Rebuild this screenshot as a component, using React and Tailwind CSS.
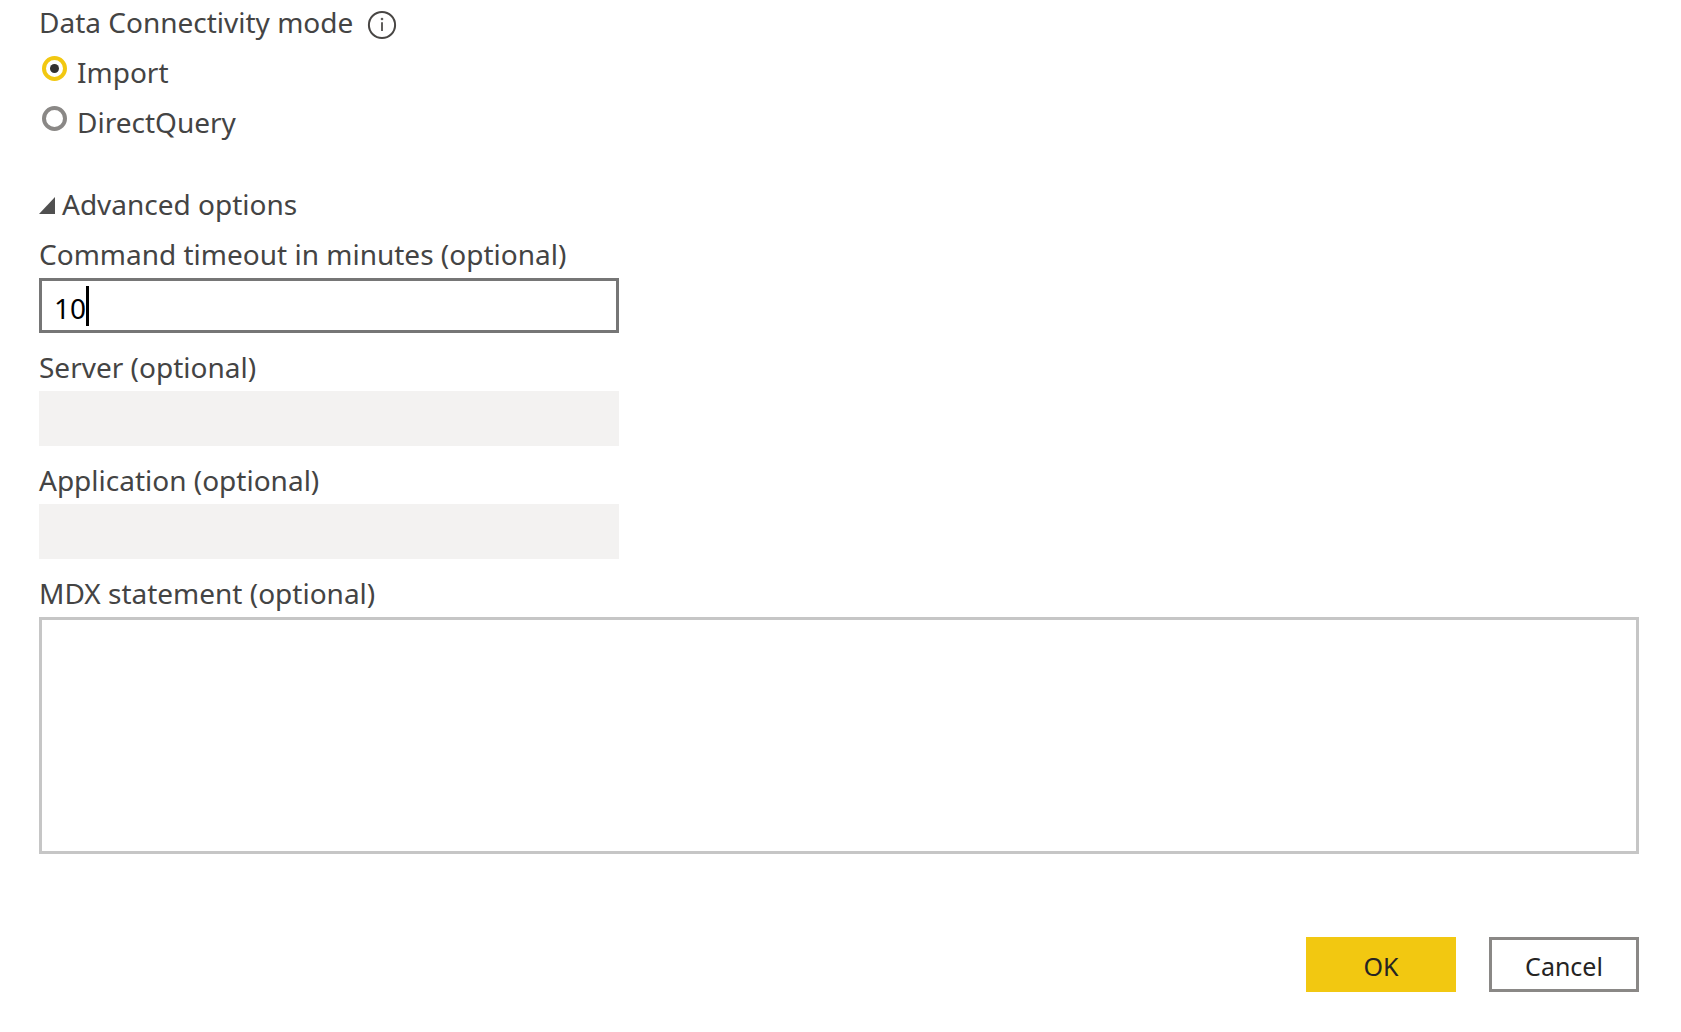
import { useState } from "react";

function InfoIcon() {
  return (
    <svg viewBox="0 0 30 30" className="size-[30px]" fill="none" aria-hidden="true">
      <circle cx="15" cy="15" r="13.1" stroke="#484644" strokeWidth="2" />
      <path d="M15 12.2V21" stroke="#605e5c" strokeWidth="2" />
      <circle cx="15" cy="9" r="1.3" fill="#605e5c" />
    </svg>
  );
}

function ModeOption({ value, label, selected, onSelect }) {
  return (
    <label className="flex w-fit items-start gap-[10px]">
      <input
        type="radio"
        name="connectivity-mode"
        value={value}
        checked={selected}
        onChange={() => onSelect(value)}
        className="ml-[3px] mt-1 grid size-[25px] shrink-0 appearance-none place-content-center rounded-full border-4 border-[#8a8886] bg-white before:size-[9px] before:rounded-full checked:border-[#f2c811] checked:before:bg-[#323130]"
      />
      <span>{label}</span>
    </label>
  );
}

function Field({ id, label, children }) {
  return (
    <div className="flex flex-col items-start gap-1">
      <label htmlFor={id}>{label}</label>
      {children}
    </div>
  );
}

export default function App() {
  const [mode, setMode] = useState("import");
  const [timeout, setTimeoutValue] = useState("10");
  const [open, setOpen] = useState(true);

  return (
    <form
      onSubmit={(e) => e.preventDefault()}
      className="flex flex-col bg-white pt-[2px] pr-[42px] pb-10 pl-[39px] font-['Noto_Sans',sans-serif] text-[28px] leading-10 text-[#444444]"
    >
      <fieldset className="flex flex-col gap-[10px]">
        <legend className="contents">
          <span className="flex items-center gap-[14px]">
            Data Connectivity mode
            <button type="button" aria-label="About data connectivity modes" className="mt-[6px]">
              <InfoIcon />
            </button>
          </span>
        </legend>
        <ModeOption value="import" label="Import" selected={mode === "import"} onSelect={setMode} />
        <ModeOption value="directquery" label="DirectQuery" selected={mode === "directquery"} onSelect={setMode} />
      </fieldset>

      <button
        type="button"
        aria-expanded={open}
        onClick={() => setOpen(!open)}
        className="mt-[42px] flex w-fit items-center gap-[7px]"
      >
        <svg viewBox="0 0 16 17" className="mt-[2px] h-[17px] w-4" aria-hidden="true">
          <path d="M16 0V17H0Z" fill="#505050" />
        </svg>
        Advanced options
      </button>

      {open && (
        <div className="mt-[10px] flex flex-col gap-[14px]">
          <Field id="timeout" label="Command timeout in minutes (optional)">
            <div className="relative w-full max-w-[580px]">
              <input
                id="timeout"
                type="text"
                value={timeout}
                onChange={(e) => setTimeoutValue(e.target.value)}
                className="h-[55px] w-full border-3 border-[#767676] bg-white px-3 pt-1 text-[28px] text-black caret-transparent outline-none"
              />
              <span className="absolute top-2 left-[47px] h-10 w-[3px] bg-black" />
            </div>
          </Field>
          <Field id="server" label="Server (optional)">
            <input id="server" type="text" disabled className="h-[55px] w-full max-w-[580px] bg-[#f3f2f1] px-4" />
          </Field>
          <Field id="application" label="Application (optional)">
            <input id="application" type="text" disabled className="h-[55px] w-full max-w-[580px] bg-[#f3f2f1] px-4" />
          </Field>
          <Field id="mdx" label="MDX statement (optional)">
            <textarea
              id="mdx"
              className="h-[237px] w-full resize-none border-3 border-[#c6c6c6] bg-white px-3 outline-none"
            />
          </Field>
        </div>
      )}

      <div className="mt-[83px] flex justify-end gap-[33px] text-[25px] text-[#252423]">
        <button type="submit" className="h-[55px] w-[150px] bg-[#f2c811] pt-[2px]">
          OK
        </button>
        <button type="button" className="h-[55px] w-[150px] border-3 border-[#8a8886] bg-white pt-[2px]">
          Cancel
        </button>
      </div>
    </form>
  );
}
